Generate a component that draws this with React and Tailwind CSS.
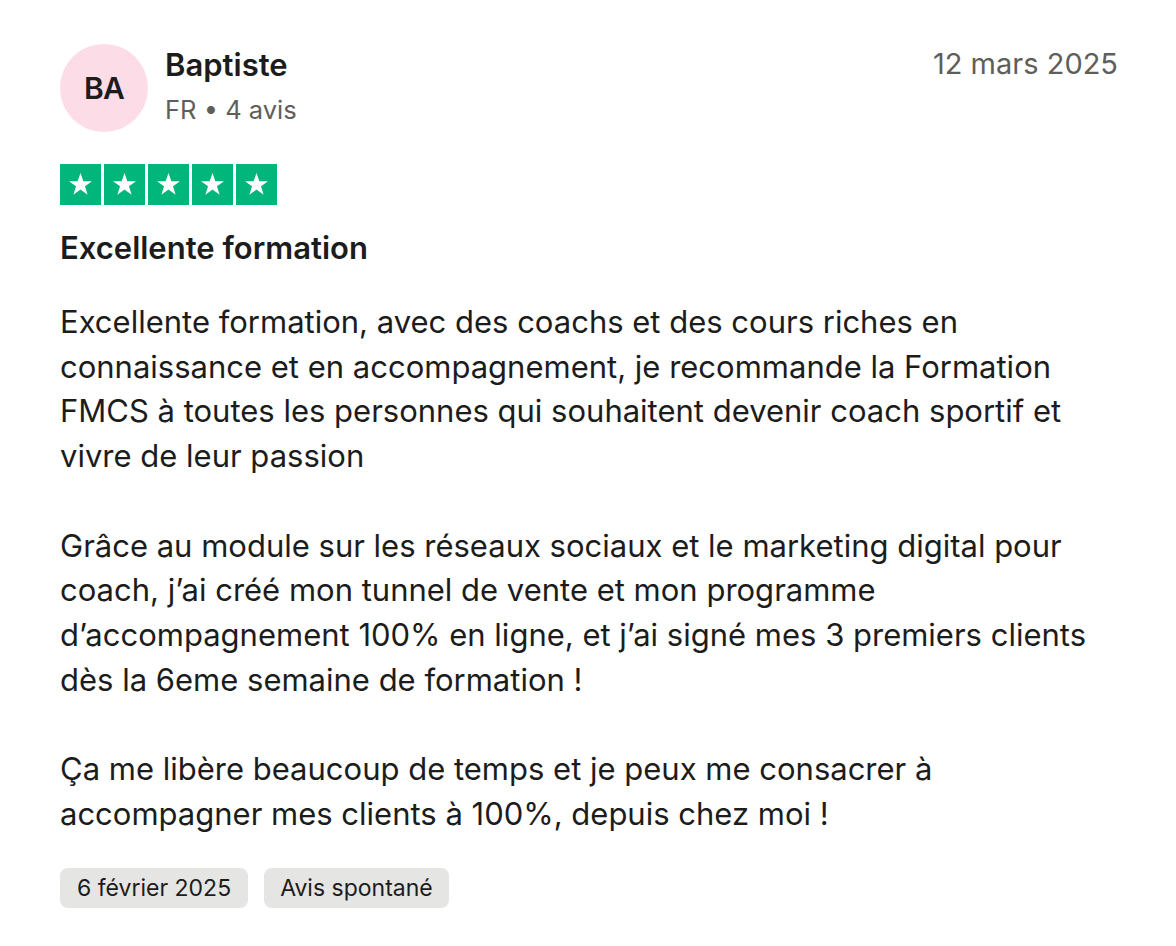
import React from 'react';

function Star() {
  return (
    <div className="w-[41px] h-[41px] bg-[#00b67a] flex items-center justify-center">
      <svg viewBox="0 0 24 24" className="w-[29px] h-[29px]">
        <polygon fill="#fff" points="12,2.5 14.35,9.3 21.5,9.3 15.7,13.5 17.9,20.5 12,16.2 6.1,20.5 8.3,13.5 2.5,9.3 9.65,9.3" />
      </svg>
    </div>
  );
}

const paragraphs = [
  [
    'Excellente formation, avec des coachs et des cours riches en',
    'connaissance et en accompagnement, je recommande la Formation',
    'FMCS à toutes les personnes qui souhaitent devenir coach sportif et',
    'vivre de leur passion',
  ],
  [
    'Grâce au module sur les réseaux sociaux et le marketing digital pour',
    'coach, j’ai créé mon tunnel de vente et mon programme',
    'd’accompagnement 100% en ligne, et j’ai signé mes 3 premiers clients',
    'dès la 6eme semaine de formation !',
  ],
  [
    'Ça me libère beaucoup de temps et je peux me consacrer à',
    'accompagner mes clients à 100%, depuis chez moi !',
  ],
];

export default function App() {
  return (
    <div className="w-[1176px] h-[946px] bg-white pl-[60px] pr-[58px] pt-[44px] text-[#1c1c1c]" style={{ fontFamily: 'Inter, "Noto Sans", sans-serif' }}>
      <div className="flex justify-between h-[88px]">
        <div className="flex gap-[17px]">
          <div className="w-[88px] h-[88px] rounded-full bg-[#fcdce6] flex items-center justify-center text-[30px] font-semibold tracking-tight">
            BA
          </div>
          <div>
            <div className="text-[31px] leading-[42px] font-semibold">Baptiste</div>
            <div className="text-[25.5px] leading-[48px] text-[#5e5e5a]">FR • 4 avis</div>
          </div>
        </div>
        <div className="text-[29px] leading-[40px] text-[#5e5e5a]">12 mars 2025</div>
      </div>

      <div className="flex gap-[3px] mt-[32px]">
        <Star />
        <Star />
        <Star />
        <Star />
        <Star />
      </div>

      <h2 className="mt-[23px] text-[31px] leading-[40px] font-semibold">Excellente formation</h2>

      <div className="mt-[32px] text-[31px] leading-[44.7px] flex flex-col gap-[44.7px]">
        {paragraphs.map((p, i) => (
          <p key={i} className="whitespace-nowrap">
            {p.map((line, j) => (
              <React.Fragment key={j}>
                {line}
                {j < p.length - 1 && <br />}
              </React.Fragment>
            ))}
          </p>
        ))}
      </div>

      <div className="flex gap-[16px] mt-[32px]">
        <span className="h-[40px] px-[17px] rounded-[8px] bg-[#e5e5e3] flex items-center text-[23px]">6 février 2025</span>
        <span className="h-[40px] px-[16px] rounded-[8px] bg-[#e5e5e3] flex items-center text-[23px]">Avis spontané</span>
      </div>
    </div>
  );
}
